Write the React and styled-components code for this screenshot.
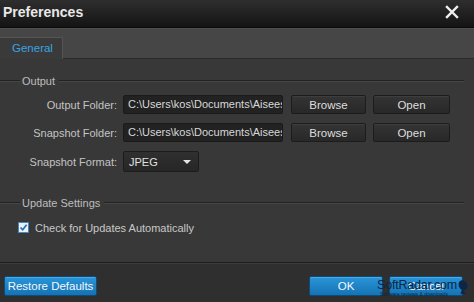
import React from 'react';
import styled, { createGlobalStyle } from 'styled-components';

const GlobalStyle = createGlobalStyle`
    html, body {
        margin: 0;
        padding: 0;
        background: #383838;
    }
    #root {
        width: 474px;
        height: 302px;
    }
`

const Window = styled.div`
    width: 474px;
    height: 302px;
    display: flex;
    flex-direction: column;
    font-family: "Liberation Sans", Arial, sans-serif;
    font-size: 11px;
    color: #cfcfcf;
    overflow: hidden;
    position: relative;
`

const TitleBar = styled.div`
    height: 27px;
    flex: none;
    display: flex;
    align-items: center;
    justify-content: space-between;
    padding: 0 15px 0 3px;
    background: linear-gradient(#2e2e2e, #141414);
    border-bottom: 1px solid #0a0a0a;
`

const Title = styled.div`
    font-size: 14px;
    font-weight: bold;
    color: #e8e8e8;
    margin-top: -4px;
`

const CloseButton = styled.div`
    width: 14px;
    height: 14px;
    margin-top: -3px;
    display: flex;
`

const TabBar = styled.div`
    height: 31px;
    flex: none;
    display: flex;
    align-items: flex-end;
    background: #464646;
    border-top: 1px solid #505050;
    border-bottom: 1px solid #2a2a2a;
    box-sizing: border-box;
`

const Tab = styled.div`
    width: 63px;
    height: 22px;
    box-sizing: border-box;
    margin-bottom: -1px;
    background: #3a3a3a;
    border: 1px solid #555;
    border-left: none;
    border-bottom: none;
    border-radius: 0 2px 0 0;
    color: ${p => (p.active ? '#3ba3e0' : '#ccc')};
    font-size: 11.5px;
    padding-left: 12px;
    line-height: 20px;
`

const Content = styled.div`
    flex: 1;
    background: #383838;
    display: flex;
    flex-direction: column;
`

const GroupHeader = styled.div`
    display: flex;
    align-items: center;
    height: 14px;
    margin-top: ${p => p.top}px;
    margin-right: 10px;
    color: #bdbdbd;

    &::before {
        content: '';
        width: 20px;
        height: 1px;
        background: #222;
        border-bottom: 1px solid #474747;
        margin-right: 2px;
    }
    &::after {
        content: '';
        flex: 1;
        height: 1px;
        background: #222;
        border-bottom: 1px solid #474747;
        margin-left: 4px;
    }
`

const Rows = styled.div`
    display: flex;
    flex-direction: column;
    gap: 9px;
    margin-top: 7px;
`

const Row = styled.div`
    display: flex;
    align-items: center;
    height: ${p => p.h || 19}px;
`

const Label = styled.div`
    width: 117px;
    text-align: right;
    color: #c4c4c4;
    margin-right: 6px;
    white-space: nowrap;
`

const PathInput = styled.div`
    width: 160px;
    height: 19px;
    box-sizing: border-box;
    background: #222;
    border: 1px solid #1a1a1a;
    border-radius: 2px;
    color: #d8d8d8;
    padding-left: 4px;
    line-height: 17px;
    white-space: nowrap;
    overflow: hidden;
    margin-right: 8px;
`

const Button = styled.div`
    width: ${p => p.w}px;
    height: ${p => p.h || 19}px;
    box-sizing: border-box;
    margin-right: ${p => p.mr || 0}px;
    display: flex;
    align-items: center;
    justify-content: center;
    border-radius: 2px;
    font-size: 11.5px;
    background: ${p => (p.primary ? 'linear-gradient(#2a95d8, #1573b4)' : 'linear-gradient(#343434, #282828)')};
    border: 1px solid ${p => (p.primary ? '#0e4b78' : '#1c1c1c')};
    box-shadow: inset 0 1px 0 ${p => (p.primary ? '#4aa8e2' : '#3e3e3e')};
    color: ${p => (p.primary ? '#f4f8fc' : '#dedede')};
`

const Select = styled.div`
    width: 76px;
    height: 21px;
    box-sizing: border-box;
    display: flex;
    align-items: center;
    justify-content: space-between;
    padding: 0 7px 0 5px;
    background: linear-gradient(#303030, #262626);
    border: 1px solid #1c1c1c;
    border-radius: 2px;
    color: #e0e0e0;
`

const Caret = styled.span`
    width: 0;
    height: 0;
    border-left: 4px solid transparent;
    border-right: 4px solid transparent;
    border-top: 4px solid #e6e6e6;
`

const CheckRow = styled.label`
    display: flex;
    align-items: center;
    margin-top: 11px;
    padding-left: 18px;
    height: 13px;
    color: #c8c8c8;
`

const CheckBox = styled.span`
    width: 11px;
    height: 11px;
    box-sizing: border-box;
    background: #e9f2fa;
    border: 1px solid #4a86b8;
    display: flex;
    margin-right: 6px;
`

const Footer = styled.div`
    height: 40px;
    flex: none;
    box-sizing: border-box;
    background: #2f2f2f;
    border-top: 1px solid #1e1e1e;
    box-shadow: inset 0 1px 0 #3c3c3c;
    display: flex;
    align-items: flex-start;
    padding: 13px 11px 0 4px;
`

const Spacer = styled.div`
    flex: 1;
`

const Watermark = styled.div`
    position: absolute;
    left: 377px;
    top: 279px;
    width: 96px;
    display: flex;
    align-items: flex-start;
    color: #0b2647;
    pointer-events: none;
`

const MarkText = styled.div`
    display: flex;
    flex-direction: column;
    font-size: 12.5px;
    line-height: 12px;
    letter-spacing: -0.2px;
    white-space: nowrap;
`

const MarkSub = styled.span`
    font-size: 5px;
    line-height: 6px;
    letter-spacing: 0;
    padding-left: 3px;
`

function CloseIcon() {
    return (
        <svg width="14" height="14" viewBox="0 0 14 14">
            <path d="M2 2 L12 12 M12 2 L2 12" stroke="#f0f0f0" strokeWidth="2.4" strokeLinecap="square" />
        </svg>
    )
}

function Tick() {
    return (
        <svg width="9" height="9" viewBox="0 0 9 9">
            <path d="M1.5 4.5 L3.7 6.8 L7.6 1.8" stroke="#1d6fb8" strokeWidth="1.6" fill="none" />
        </svg>
    )
}

function Dish() {
    return (
        <svg width="12" height="16" viewBox="0 0 14 18">
            <ellipse cx="7" cy="7" rx="5" ry="6" fill="#0b2647" transform="rotate(-25 7 7)" />
            <path d="M6 11 L4 17 L10 17 Z" fill="#0b2647" />
        </svg>
    )
}

const folders = [
    { label: 'Output Folder:', path: 'C:\\Users\\kos\\Documents\\Aisees' },
    { label: 'Snapshot Folder:', path: 'C:\\Users\\kos\\Documents\\Aisees' },
]

export default function App() {
    return (
        <Window>
            <GlobalStyle />
            <TitleBar>
                <Title>Preferences</Title>
                <CloseButton><CloseIcon /></CloseButton>
            </TitleBar>
            <TabBar>
                <Tab active>General</Tab>
            </TabBar>
            <Content>
                <GroupHeader top={15}>Output</GroupHeader>
                <Rows>
                    {folders.map(f => (
                        <Row key={f.label}>
                            <Label>{f.label}</Label>
                            <PathInput>{f.path}</PathInput>
                            <Button w={75} mr={7}>Browse</Button>
                            <Button w={77}>Open</Button>
                        </Row>
                    ))}
                    <Row h={21}>
                        <Label>Snapshot Format:</Label>
                        <Select>JPEG<Caret /></Select>
                    </Row>
                </Rows>
                <GroupHeader top={24}>Update Settings</GroupHeader>
                <CheckRow>
                    <CheckBox><Tick /></CheckBox>
                    Check for Updates Automatically
                </CheckRow>
            </Content>
            <Footer>
                <Button primary w={93} h={20}>Restore Defaults</Button>
                <Spacer />
                <Button primary w={74} h={20} mr={6}>OK</Button>
                <Button primary w={74} h={20}>Cancel</Button>
            </Footer>
            <Watermark>
                <MarkText>
                    SoftRadar.com
                    <MarkSub>Software reviews &amp; downloads</MarkSub>
                </MarkText>
                <Dish />
            </Watermark>
        </Window>
    )
}
